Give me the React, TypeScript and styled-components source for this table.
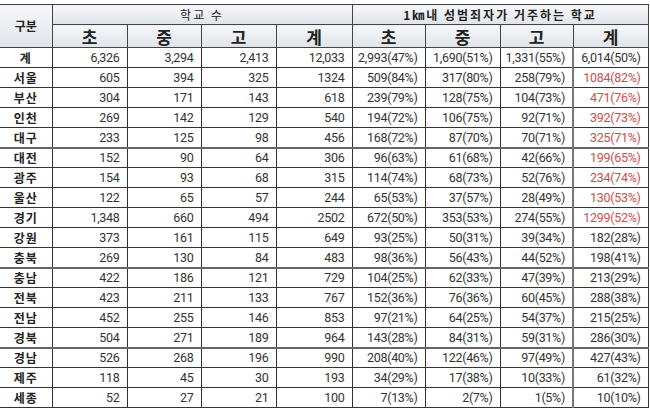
import styled, { createGlobalStyle } from 'styled-components'

const GlobalStyle = createGlobalStyle`
  html, body {
    margin: 0;
    padding: 0;
    background: #fff;
  }
  body {
    font-family: 'Noto Sans CJK KR', 'Noto Sans', sans-serif;
    color: #222;
  }
`

type Row = [string, string, string, string, string, string, string, string, string, boolean?]

const rows: Row[] = [
  ['계', '6,326', '3,294', '2,413', '12,033', '2,993(47%)', '1,690(51%)', '1,331(55%)', '6,014(50%)'],
  ['서울', '605', '394', '325', '1324', '509(84%)', '317(80%)', '258(79%)', '1084(82%)', true],
  ['부산', '304', '171', '143', '618', '239(79%)', '128(75%)', '104(73%)', '471(76%)', true],
  ['인천', '269', '142', '129', '540', '194(72%)', '106(75%)', '92(71%)', '392(73%)', true],
  ['대구', '233', '125', '98', '456', '168(72%)', '87(70%)', '70(71%)', '325(71%)', true],
  ['대전', '152', '90', '64', '306', '96(63%)', '61(68%)', '42(66%)', '199(65%)', true],
  ['광주', '154', '93', '68', '315', '114(74%)', '68(73%)', '52(76%)', '234(74%)', true],
  ['울산', '122', '65', '57', '244', '65(53%)', '37(57%)', '28(49%)', '130(53%)', true],
  ['경기', '1,348', '660', '494', '2502', '672(50%)', '353(53%)', '274(55%)', '1299(52%)', true],
  ['강원', '373', '161', '115', '649', '93(25%)', '50(31%)', '39(34%)', '182(28%)'],
  ['충북', '269', '130', '84', '483', '98(36%)', '56(43%)', '44(52%)', '198(41%)'],
  ['충남', '422', '186', '121', '729', '104(25%)', '62(33%)', '47(39%)', '213(29%)'],
  ['전북', '423', '211', '133', '767', '152(36%)', '76(36%)', '60(45%)', '288(38%)'],
  ['전남', '452', '255', '146', '853', '97(21%)', '64(25%)', '54(37%)', '215(25%)'],
  ['경북', '504', '271', '189', '964', '143(28%)', '84(31%)', '59(31%)', '286(30%)'],
  ['경남', '526', '268', '196', '990', '208(40%)', '122(46%)', '97(49%)', '427(43%)'],
  ['제주', '118', '45', '30', '193', '34(29%)', '17(38%)', '10(33%)', '61(32%)'],
  ['세종', '52', '27', '21', '100', '7(13%)', '2(7%)', '1(5%)', '10(10%)'],
]

const thickAbove = new Set(['대전', '충남', '경남'])
const widths = [52, 75, 74, 75, 76, 73, 75, 73, 75]

const Page = styled.div`
  padding-top: 4px;
`

const Table = styled.table`
  border-collapse: collapse;
  table-layout: fixed;
  width: 648px;
`

const HeadCell = styled.th<{ $big?: boolean; $bold?: boolean }>`
  background: linear-gradient(to bottom, #f6f7f9, #dfe4ea);
  border: 1px solid #444;
  padding: 0;
  font-weight: ${(p) => (p.$big || p.$bold ? 700 : 400)};
  font-size: ${(p) => (p.$big ? '17px' : '12px')};
  letter-spacing: ${(p) => (p.$big ? '0' : '2px')};
  color: #222;
  line-height: 1;
  white-space: nowrap;
`

const GroupRow = styled.tr`
  height: 20px;
`

const SubRow = styled.tr`
  height: 23px;
`

const BodyRow = styled.tr<{ $thick?: boolean }>`
  height: 20px;
  & > td {
    border-top: ${(p) => (p.$thick ? '2px solid #666' : '1px solid #333')};
  }
`

const Label = styled.td`
  border: 1px solid #333;
  border-left: none;
  text-align: center;
  font-weight: 700;
  font-size: 12px;
  letter-spacing: 1px;
  padding: 0;
  color: #222;
`

const Num = styled.td<{ $red?: boolean; $sep?: boolean }>`
  border: 1px solid #333;
  border-left: ${(p) => (p.$sep ? '2px solid #777' : '1px solid #333')};
  text-align: right;
  padding: 0 7px 0 0;
  font-family: Roboto, 'Noto Sans', sans-serif;
  font-size: 12.5px;
  letter-spacing: -0.3px;
  color: ${(p) => (p.$red ? '#d04c4c' : '#333')};
  white-space: nowrap;
`

const Corner = styled(HeadCell)`
  border-left: none;
  font-weight: 700;
  letter-spacing: 0;
`

export default function App() {
  return (
    <>
      <GlobalStyle />
      <Page>
        <Table>
          <colgroup>
            {widths.map((w, i) => (
              <col key={i} style={{ width: w }} />
            ))}
          </colgroup>
          <thead>
            <GroupRow>
              <Corner rowSpan={2}>구분</Corner>
              <HeadCell colSpan={4}>학교 수</HeadCell>
              <HeadCell colSpan={4} $bold>
                1㎞내 성범죄자가 거주하는 학교
              </HeadCell>
            </GroupRow>
            <SubRow>
              {['초', '중', '고', '계', '초', '중', '고', '계'].map((t, i) => (
                <HeadCell key={i} $big>
                  {t}
                </HeadCell>
              ))}
            </SubRow>
          </thead>
          <tbody>
            {rows.map((r) => (
              <BodyRow key={r[0]} $thick={thickAbove.has(r[0])}>
                <Label>{r[0]}</Label>
                {r.slice(1, 9).map((v, i) => (
                  <Num key={i} $sep={i === 7} $red={i === 7 && r[9] === true}>
                    {v as string}
                  </Num>
                ))}
              </BodyRow>
            ))}
          </tbody>
        </Table>
      </Page>
    </>
  )
}
